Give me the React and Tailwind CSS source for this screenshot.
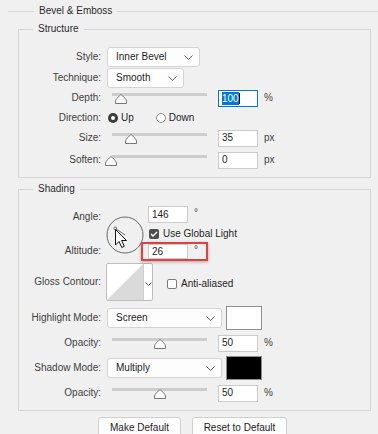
const Chevron = () => (
  <svg width="9" height="5" viewBox="0 0 9 5" className="shrink-0">
    <path d="M0.5 0.5L4.5 4.5L8.5 0.5" fill="none" stroke="#5a5a5a" />
  </svg>
);

function Label({ children }) {
  return <div className="w-[82px] shrink-0 text-right text-[#3f3f3f]">{children}</div>;
}

function Select({ value, className }) {
  return (
    <div className={`flex items-center justify-between bg-[#fdfdfd] border border-[#d4d4d4] rounded-[3px] pl-[8px] pr-[6px] text-[#1e1e1e] ${className}`}>
      <span>{value}</span>
      <Chevron />
    </div>
  );
}

function Slider({ pos }) {
  return (
    <div className="relative w-[95px] h-[20px] ml-[11px] shrink-0">
      <div className="absolute left-0 right-0 top-[5px] h-[3px] bg-[#cdcdcd]" />
      <svg className="absolute top-[6px]" style={{ left: pos - 6 }} width="12" height="10" viewBox="0 0 12 10">
        <path d="M0.5 9.5V7C0.5 5.5 4 2 6 0.5C8 2 11.5 5.5 11.5 7V9.5Z" fill="#fff" stroke="#777" />
      </svg>
    </div>
  );
}

function NumInput({ value, focused, className = 'h-[17px]' }) {
  return (
    <div className={`w-[40px] shrink-0 flex items-center pl-[3px] bg-white border ${focused ? 'border-[#0078d7]' : 'border-[#cbcbcb]'} text-[#1e1e1e] ${className}`}>
      {focused ? (
        <>
          <span className="bg-[#0078d7] text-white leading-[13px]">{value}</span>
          <span className="w-px h-[11px] bg-black" />
        </>
      ) : (
        <span>{value}</span>
      )}
    </div>
  );
}

function SliderRow({ label, pos, value, unit, focused, className = '' }) {
  return (
    <div className={`flex items-center h-[20px] ${className}`}>
      <Label>{label}</Label>
      <Slider pos={pos} />
      <div className="ml-[11px]">
        <NumInput value={value} focused={focused} />
      </div>
      <span className="ml-[6px] text-[#3f3f3f]">{unit}</span>
    </div>
  );
}

function Check({ checked }) {
  return checked ? (
    <div className="w-[10px] h-[10px] rounded-[2px] bg-[#4e4e4e] flex items-center justify-center shrink-0">
      <svg width="8" height="6" viewBox="0 0 8 6">
        <path d="M1 3L3 5L7 1" fill="none" stroke="#fff" strokeWidth="1.5" />
      </svg>
    </div>
  ) : (
    <div className="w-[10px] h-[10px] rounded-[2px] bg-white border border-[#7a7a7a] shrink-0" />
  );
}

function Group({ title, className = '', children }) {
  return (
    <fieldset className={`border border-[#d6d6d6] ${className}`}>
      <legend className="ml-[14px] px-[5px] leading-[12px] text-[#2b2b2b]">{title}</legend>
      {children}
    </fieldset>
  );
}

function Button({ children, className }) {
  return (
    <div className={`h-[22px] flex items-center justify-center bg-[#fdfdfd] border border-[#cfcfcf] rounded-[3px] text-[#1e1e1e] ${className}`}>
      {children}
    </div>
  );
}

export default function App() {
  return (
    <div className="w-[378px] h-[434px] overflow-hidden bg-[#f0f0f0] pl-[8px] pt-[5px] font-['Liberation_Sans',Arial,sans-serif] text-[10px] leading-[12px]">
      <fieldset className="border-t border-[#d6d6d6] pl-[10px] pr-[7px]">
        <legend className="ml-[16px] px-[5px] leading-[12px] text-[#2b2b2b]">Bevel &amp; Emboss</legend>

        <Group title="Structure" className="mt-[6px] pt-[12px] pb-[7px]">
          <div className="flex items-center h-[20px]">
            <Label>Style:</Label>
            <Select value="Inner Bevel" className="ml-[6px] w-[93px] h-[20px]" />
          </div>
          <div className="flex items-center h-[20px] mt-[1px]">
            <Label>Technique:</Label>
            <Select value="Smooth" className="ml-[6px] w-[77px] h-[20px]" />
          </div>
          <SliderRow label="Depth:" pos={8.5} value="100" unit="%" focused />
          <div className="flex items-center h-[20px]">
            <Label>Direction:</Label>
            <div className="ml-[7px] w-[10px] h-[10px] rounded-full bg-[#3c3c3c] flex items-center justify-center">
              <div className="w-[4px] h-[4px] rounded-full bg-white" />
            </div>
            <span className="ml-[3px] text-[#1e1e1e]">Up</span>
            <div className="ml-[22px] w-[10px] h-[10px] rounded-full bg-white border border-[#8a8a8a]" />
            <span className="ml-[3px] text-[#1e1e1e]">Down</span>
          </div>
          <SliderRow label="Size:" pos={18.5} value="35" unit="px" />
          <SliderRow label="Soften:" pos={-1} value="0" unit="px" className="mt-[2px]" />
        </Group>

        <Group title="Shading" className="mt-[5px] pt-[11px] pb-[7px]">
          <div className="flex h-[55px]">
            <div className="w-[82px] shrink-0 text-right text-[#3f3f3f]">
              <div className="mt-[1px] leading-[20px]">Angle:</div>
              <div className="mt-[14px] leading-[20px]">Altitude:</div>
            </div>
            <svg className="ml-[5px] mt-[10px] shrink-0" width="38" height="38" viewBox="0 0 38 38">
              <circle cx="19" cy="19" r="18" fill="none" stroke="#6a6a6a" />
              <line x1="19" y1="19" x2="9.5" y2="12.5" stroke="#6a6a6a" />
              <circle cx="9.3" cy="12.3" r="1.4" fill="#f0f0f0" stroke="#6a6a6a" />
              <path d="M9.5 13.5V29L13 25.5L15.8 31.5L18.3 30.3L15.6 24.5H20.5Z" fill="#fff" stroke="#111" strokeLinejoin="round" />
            </svg>
            <div className="ml-[4px] flex flex-col">
              <div className="flex items-center h-[17px]">
                <NumInput value="146" />
                <span className="ml-[6px] -mt-[4px] text-[#3f3f3f]">°</span>
              </div>
              <div className="flex items-center h-[12px] mt-[5px] ml-[1px]">
                <Check checked />
                <span className="ml-[4px] text-[#1e1e1e]">Use Global Light</span>
              </div>
              <div className="relative flex items-center h-[15px] mt-[4px]">
                <NumInput value="26" className="h-[15px]" />
                <span className="ml-[6px] -mt-[4px] text-[#3f3f3f]">°</span>
                <div className="absolute -left-[7px] -top-[2px] w-[67px] h-[19px] border-2 border-[#e0403f] shadow-[0_1px_3px_rgba(0,0,0,0.3)]" />
              </div>
            </div>
          </div>

          <div className="flex items-center h-[38px] mt-[2px]">
            <Label>Gloss Contour:</Label>
            <div className="ml-[5px] w-[47px] h-[38px] flex bg-white border border-[#bdbdbd] rounded-[2px] overflow-hidden">
              <svg width="36" height="36" viewBox="0 0 36 36" className="shrink-0">
                <path d="M36 0V36H0Z" fill="#dadada" />
              </svg>
              <div className="flex-1 border-l border-[#cfcfcf] flex items-center justify-center pt-[3px]">
                <svg width="7" height="4" viewBox="0 0 7 4">
                  <path d="M0.5 0.5L3.5 3.5L6.5 0.5" fill="none" stroke="#5a5a5a" />
                </svg>
              </div>
            </div>
            <div className="ml-[14px] flex items-center pt-[4px]">
              <Check />
              <span className="ml-[4px] text-[#1e1e1e]">Anti-aliased</span>
            </div>
          </div>

          <div className="flex items-center h-[24px] mt-[5px]">
            <Label>Highlight Mode:</Label>
            <Select value="Screen" className="ml-[6px] w-[115px] h-[20px]" />
            <div className="ml-[4px] w-[36px] h-[24px] bg-white border border-[#8e8e8e]" />
          </div>
          <SliderRow label="Opacity:" pos={47.5} value="50" unit="%" className="mt-[3px]" />
          <div className="flex items-center h-[24px] mt-[3px]">
            <Label>Shadow Mode:</Label>
            <Select value="Multiply" className="ml-[6px] w-[115px] h-[20px]" />
            <div className="ml-[4px] w-[36px] h-[24px] bg-black border border-[#8e8e8e]" />
          </div>
          <SliderRow label="Opacity:" pos={47.5} value="50" unit="%" className="mt-[3px]" />
        </Group>

        <div className="flex mt-[6px] ml-[80px]">
          <Button className="w-[83px]">Make Default</Button>
          <Button className="w-[95px] ml-[11px]">Reset to Default</Button>
        </div>
      </fieldset>
    </div>
  );
}
